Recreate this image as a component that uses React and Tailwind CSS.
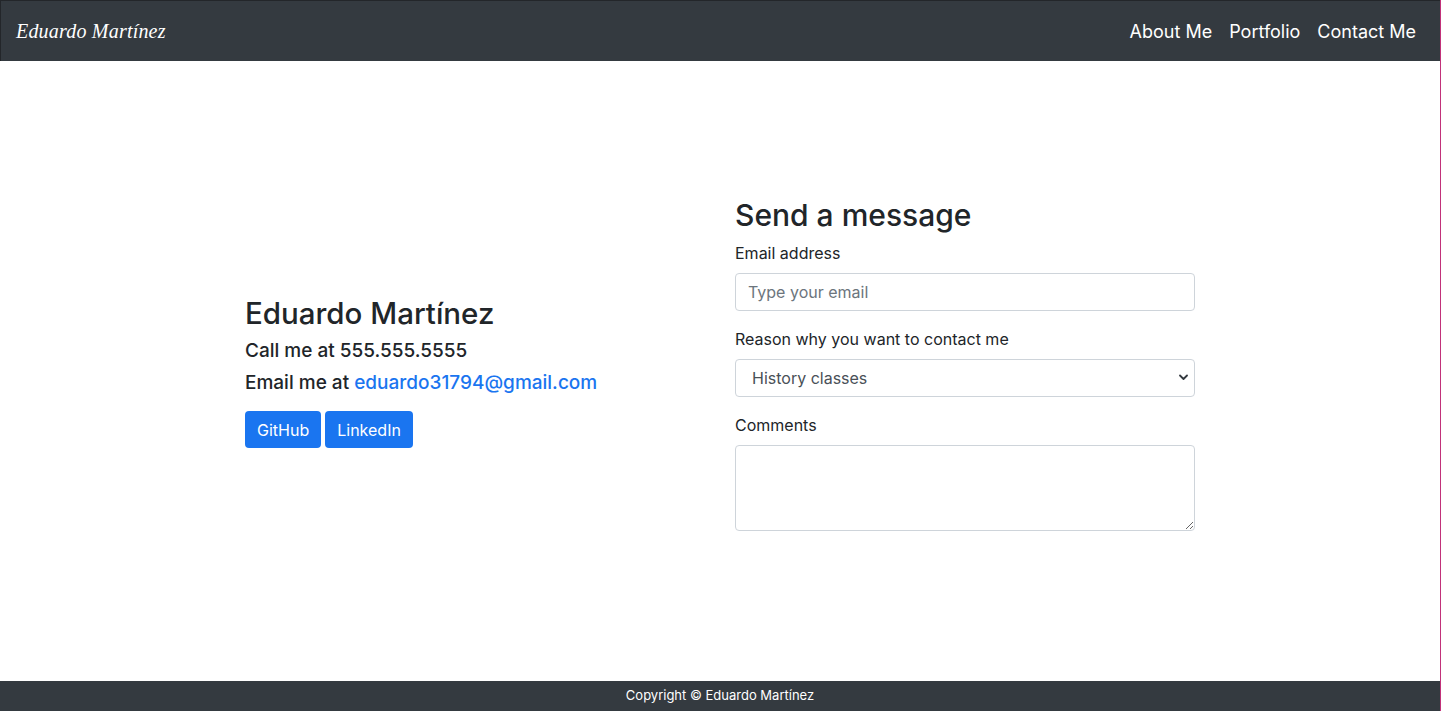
import React from 'react';

/**
 * Contact page
 * Navbar, contact details with a message form, and footer
 */

const navLinks = ['About Me', 'Portfolio', 'Contact Me'];

const Navbar = () => (
  <nav className="h-[61px] shrink-0 bg-[#343a40] border-t border-l border-[#23262a] flex items-center justify-between pl-[15px] pr-[24px]">
    <span
      className="text-white text-[20px] italic tracking-[0.2px]"
      style={{ fontFamily: '"Liberation Serif", serif' }}
    >
      Eduardo Martínez
    </span>
    <div className="flex items-center gap-[17px] text-white text-[18px]">
      {navLinks.map((link) => (
        <a key={link} href="#" className="text-white">
          {link}
        </a>
      ))}
    </div>
  </nav>
);

const ContactInfo = () => (
  <div className="w-[490px] text-[#212529]">
    <h2 className="text-[29.5px] leading-[38px] font-medium mb-[7px]">Eduardo Martínez</h2>
    <p className="text-[19px] leading-[24px] font-medium mb-[8px]">Call me at 555.555.5555</p>
    <p className="text-[19px] leading-[24px] font-medium mb-[16px]">
      Email me at{' '}
      <a href="#" className="text-[#1a75f0]">
        eduardo31794@gmail.com
      </a>
    </p>
    <div className="flex gap-[4px]">
      <button className="h-[37px] px-[12px] rounded-[4px] bg-[#1a75f0] text-white text-[16px]">
        GitHub
      </button>
      <button className="h-[37px] px-[12px] rounded-[4px] bg-[#1a75f0] text-white text-[16px]">
        LinkedIn
      </button>
    </div>
  </div>
);

const MessageForm = () => (
  <form className="w-[460px] mb-[16px] text-[#212529]">
    <h2 className="text-[30px] leading-[38px] font-medium mb-[7px]">Send a message</h2>
    <div className="mb-[16px]">
      <label className="block text-[16px] leading-[24px] mb-[8px]">Email address</label>
      <input
        type="email"
        placeholder="Type your email"
        className="w-full h-[38px] px-[12px] border border-[#ced4da] rounded-[4px] text-[16px] placeholder:text-[#6c757d] outline-none"
      />
    </div>
    <div className="mb-[16px]">
      <label className="block text-[16px] leading-[24px] mb-[8px]">Reason why you want to contact me</label>
      <div className="relative">
        <select className="w-full h-[38px] pl-[16px] pr-[32px] border border-[#ced4da] rounded-[4px] text-[16px] text-[#495057] bg-white appearance-none outline-none">
          <option>History classes</option>
        </select>
        <svg
          className="absolute right-[7px] top-[15px] w-[9px] h-[7px] text-[#343a40]"
          viewBox="0 0 9 7"
          fill="none"
          stroke="currentColor"
          strokeWidth="1.8"
          strokeLinecap="round"
          strokeLinejoin="round"
        >
          <path d="M1 1.5l3.5 3.5 3.5-3.5" />
        </svg>
      </div>
    </div>
    <div>
      <label className="block text-[16px] leading-[24px] mb-[8px]">Comments</label>
      <textarea className="block w-full h-[86px] px-[12px] py-[6px] border border-[#ced4da] rounded-[4px] text-[16px] outline-none" />
    </div>
  </form>
);

const Footer = () => (
  <footer className="h-[30px] shrink-0 bg-[#343a40] flex items-center justify-center text-white text-[13px]">
    Copyright © Eduardo Martínez
  </footer>
);

export default function App() {
  return (
    <div
      className="h-[711px] flex flex-col bg-white border-r border-[#c2317a]"
      style={{ fontFamily: 'Inter, "Liberation Sans", sans-serif' }}
    >
      <Navbar />
      <main className="flex-1 flex items-center pl-[245px]">
        <ContactInfo />
        <MessageForm />
      </main>
      <Footer />
    </div>
  );
}
